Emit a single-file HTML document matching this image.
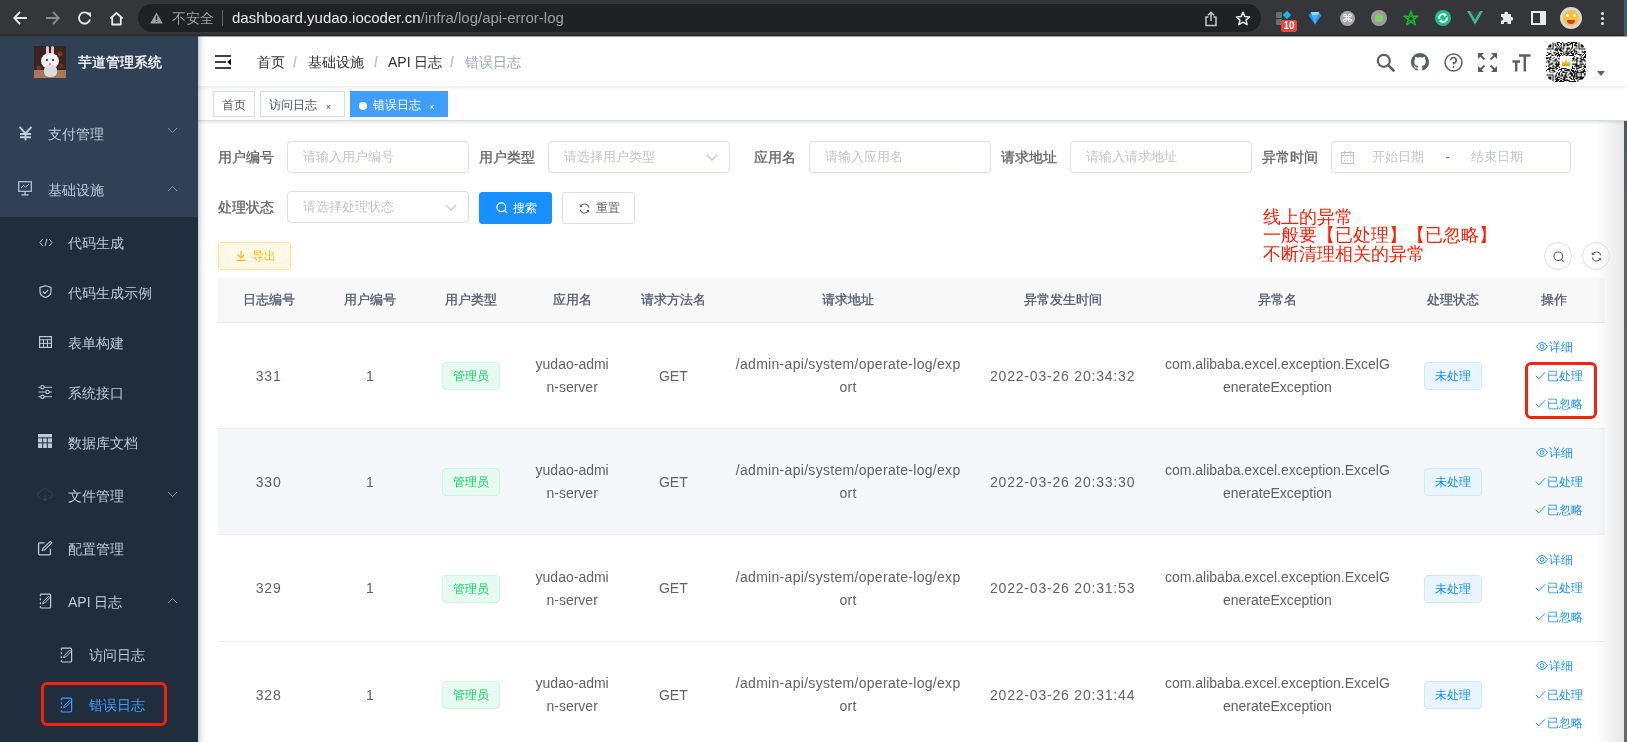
<!DOCTYPE html>
<html><head><meta charset="utf-8">
<style>
*{box-sizing:border-box;margin:0;padding:0}
html,body{width:1627px;height:742px;overflow:hidden;background:#fff}
body{position:relative;font-family:"Liberation Sans",sans-serif;color:#606266;will-change:transform}
.abs{position:absolute}
/* browser chrome */
#chrome{position:absolute;left:0;top:0;width:1627px;height:36px;background:#35363a}
#pill{position:absolute;left:138px;top:4px;width:1123px;height:28px;border-radius:14px;background:#202124}
.ct{position:absolute;white-space:nowrap}
/* sidebar */
#side{position:absolute;left:0;top:36px;width:198px;height:706px;background:#304156;overflow:hidden}
#sub{position:absolute;left:0;top:181px;width:198px;height:525px;background:#1f2d3d}
.mi{position:absolute;color:#bfcbd9;font-size:14px;white-space:nowrap;line-height:20px}
.ico{position:absolute}
/* header */
#nav{position:absolute;z-index:2;left:198px;top:36px;width:1429px;height:50px;background:#fff;box-shadow:0 2px 4px rgba(0,21,41,.08)}
#tags{position:absolute;z-index:1;left:198px;top:86px;width:1429px;height:35px;background:#fff;border-bottom:1px solid #d8dce5;box-shadow:0 1px 3px 0 rgba(0,0,0,.12),0 0 3px 0 rgba(0,0,0,.04)}
.tag{position:absolute;top:5px;height:26px;line-height:26px;border:1px solid #d8dce5;color:#495060;background:#fff;font-size:12px;padding:0 8px;white-space:nowrap}
.tag.act{background:#409eff;border-color:#409eff;color:#fff}
.bc{position:absolute;top:52px;font-size:14px;line-height:20px;white-space:nowrap}
.lbl{position:absolute;width:56px;text-align:right;font-size:14px;font-weight:normal;-webkit-text-stroke:0.3px #606266;color:#606266;line-height:32px;white-space:nowrap}
.inp{position:absolute;height:32px;border:1px solid #dcdfe6;border-radius:4px;background:#fff;font-size:13px;color:#c0c4cc;line-height:30px;padding-left:15px;white-space:nowrap}
.arr{position:absolute;right:11px;top:12px}
.btn{position:absolute;height:32px;border-radius:3px;font-size:12px;line-height:30px;white-space:nowrap;text-align:center}
.circ{position:absolute;width:28px;height:28px;border:1px solid #dcdfe6;border-radius:50%;background:#fff}
.note{position:absolute;color:#fa2008;font-size:18.4px;line-height:18.5px;white-space:nowrap}
#tbl{position:absolute;left:218px;top:278px;width:1387px;border-collapse:collapse;table-layout:fixed}
#tbl th{height:44px;background:#f8f8f9;color:#515a6e;font-size:13px;font-weight:normal;-webkit-text-stroke:0.3px #515a6e;border-bottom:1px solid #dfe6ec;text-align:center;vertical-align:middle;padding:0}
#tbl td{border-bottom:1px solid #ebeef5;text-align:center;vertical-align:middle;font-size:14px;color:#606266;line-height:23px;padding:2px 0 0 0;white-space:nowrap}
#tbl tr.hov td{background:#f5f7fa}
.etag{display:inline-block;height:28px;line-height:26px;padding:0 10px;font-size:12px;border-radius:4px;border:1px solid}
.etag.g{background:#e7faf0;border-color:#d0f5e0;color:#13ce66}
.etag.b{background:#e8f4ff;border-color:#d1e9ff;color:#1890ff}
#tbl td.ops{font-size:12px;color:#1890ff;line-height:28.5px}
.ops div{height:28.5px;white-space:nowrap}
.ops div+div{padding-left:10px}
</style></head><body>

<!-- ============ CHROME ============ -->
<div id="chrome">
  <div class="abs" style="left:0;top:34px;width:1627px;height:2px;background:#2c2d31"></div>
  <!-- back -->
  <svg class="abs" style="left:13px;top:11px" width="15" height="14" viewBox="0 0 15 14"><path d="M7 1L1.2 7L7 13M1.5 7H14" fill="none" stroke="#e8eaed" stroke-width="1.8"/></svg>
  <svg class="abs" style="left:45px;top:11px" width="15" height="14" viewBox="0 0 15 14"><path d="M8 1L13.8 7L8 13M13.5 7H1" fill="none" stroke="#8a8b8e" stroke-width="1.8"/></svg>
  <svg class="abs" style="left:77px;top:11px" width="16" height="15" viewBox="0 0 16 15"><path d="M13 8.5A5.6 5.6 0 1 1 11.5 3" fill="none" stroke="#e8eaed" stroke-width="1.8"/><path d="M9 1.5H14V6.5Z" fill="#e8eaed"/></svg>
  <svg class="abs" style="left:109px;top:11px" width="15" height="15" viewBox="0 0 15 15"><path d="M1.5 7.5L7.5 1.8L13.5 7.5M3.2 6V13.5H11.8V6" fill="none" stroke="#e8eaed" stroke-width="1.8" stroke-linejoin="round"/></svg>
  <div id="pill"></div>
  <svg class="abs" style="left:150px;top:12px" width="13" height="12" viewBox="0 0 13 12"><path d="M6.5 0.5L12.8 11.5H0.2Z" fill="#9aa0a6"/><rect x="5.9" y="3.8" width="1.3" height="4.2" fill="#202124"/><rect x="5.9" y="8.8" width="1.3" height="1.3" fill="#202124"/></svg>
  <div class="ct" style="left:172px;top:9px;font-size:14px;line-height:18px;color:#9aa0a6">不安全</div>
  <div class="abs" style="left:222px;top:10px;width:1px;height:16px;background:#5f6368"></div>
  <div class="ct" style="left:232px;top:9px;font-size:15px;line-height:18px;color:#e8eaed">dashboard.yudao.iocoder.cn<span style="color:#9aa0a6">/infra/log/api-error-log</span></div>
  <!-- share -->
  <svg class="abs" style="left:1204px;top:11px" width="14" height="16" viewBox="0 0 14 16"><path d="M4.5 6H2V14.5H12V6H9.5M7 10V1.5M4 4.3L7 1.3L10 4.3" fill="none" stroke="#c4c7c5" stroke-width="1.5"/></svg>
  <!-- star -->
  <svg class="abs" style="left:1235px;top:11px" width="16" height="15" viewBox="0 0 16 15"><path d="M8 1.2L9.9 5.6L14.6 6L11 9.1L12.1 13.7L8 11.2L3.9 13.7L5 9.1L1.4 6L6.1 5.6Z" fill="none" stroke="#e8eaed" stroke-width="1.5" stroke-linejoin="round"/></svg>
  <!-- ext 1 -->
  <div class="abs" style="left:1276px;top:12px;width:6px;height:6px;background:#6b6d70;border-radius:1px"></div>
  <div class="abs" style="left:1276px;top:19px;width:6px;height:6px;background:#6b6d70;border-radius:1px"></div>
  <div class="abs" style="left:1284px;top:12px;width:6px;height:6px;background:#1ab0f5;transform:rotate(45deg)"></div>
  <div class="abs" style="left:1281px;top:20px;width:16px;height:12px;background:#e8453c;border-radius:2px;color:#fff;font-size:10px;line-height:12px;text-align:center;font-weight:bold">10</div>
  <!-- diamond -->
  <svg class="abs" style="left:1308px;top:11px" width="14" height="14" viewBox="0 0 14 14"><path d="M3 1H11L13.5 4.5L7 13.5L0.5 4.5Z" fill="#2a8de0"/><path d="M3 1H11L10 4.5H4Z" fill="#8fd3ff"/><path d="M4 4.5H10L7 13.5Z" fill="#45b0ff"/></svg>
  <!-- cmd -->
  <div class="abs" style="left:1340px;top:11px;width:15px;height:15px;border-radius:50%;background:#a8a8a8"></div>
  <div class="ct" style="left:1340px;top:11px;width:15px;text-align:center;font-size:11px;line-height:15px;color:#fff">⌘</div>
  <!-- gray circle w green -->
  <div class="abs" style="left:1371px;top:10px;width:16px;height:16px;border-radius:50%;background:#9c9c9c"></div>
  <div class="abs" style="left:1375px;top:14px;width:8px;height:8px;border-radius:50%;background:#7fd26c"></div>
  <!-- green star -->
  <svg class="abs" style="left:1403px;top:10px" width="16" height="17" viewBox="0 0 16 17"><path d="M8 1L12.3 14.8L1 6.2H15L3.7 14.8Z" fill="none" stroke="#19b02c" stroke-width="1.5" stroke-linejoin="round"/></svg>
  <!-- teal -->
  <div class="abs" style="left:1435px;top:10px;width:16px;height:16px;border-radius:50%;background:#1bbf8f"></div>
  <svg class="abs" style="left:1435px;top:10px" width="16" height="16" viewBox="0 0 16 16"><path d="M4.5 9A3.5 3.5 0 0 1 10 5M11.5 7A3.5 3.5 0 0 1 6 11" fill="none" stroke="#fff" stroke-width="1.8"/><path d="M9 3L12 5L9 7Z M7 9L4 11L7 13Z" fill="#fff"/></svg>
  <!-- vue -->
  <svg class="abs" style="left:1467px;top:11px" width="16" height="14" viewBox="0 0 16 14"><path d="M0 0H3.2L8 8.3L12.8 0H16L8 13.8Z" fill="#41b883"/><path d="M3.2 0H5.8L8 3.8L10.2 0H12.8L8 8.3Z" fill="#34495e"/></svg>
  <!-- puzzle -->
  <svg class="abs" style="left:1500px;top:11px" width="15" height="14" viewBox="0 0 15 14"><path d="M1 3H4.5A1.8 1.8 0 1 1 8 3H11V6A1.8 1.8 0 1 1 11 9.5V13H7.5A1.8 1.8 0 1 0 4 13H1V9.5A1.8 1.8 0 1 0 1 6Z" fill="#e8eaed"/></svg>
  <!-- side panel -->
  <svg class="abs" style="left:1531px;top:11px" width="15" height="14" viewBox="0 0 15 14"><rect x="1" y="1" width="13" height="12" fill="none" stroke="#e8eaed" stroke-width="2"/><rect x="9" y="1" width="5" height="12" fill="#e8eaed"/></svg>
  <!-- avatar -->
  <div class="abs" style="left:1560px;top:7px;width:22px;height:22px;border-radius:50%;background:#d7d7d7"></div>
  <div class="abs" style="left:1563px;top:10px;width:16px;height:16px;border-radius:50%;background:#f6c33b"></div>
  <div class="abs" style="left:1567px;top:20px;width:8px;height:4px;border-radius:0 0 4px 4px;background:#d8334a"></div>
  <div class="abs" style="left:1566px;top:14px;width:3px;height:3px;border-radius:50%;background:#fff"></div>
  <div class="abs" style="left:1573px;top:14px;width:3px;height:3px;border-radius:50%;background:#fff"></div>
  <!-- kebab -->
  <div class="abs" style="left:1601px;top:12px;width:3px;height:3px;border-radius:50%;background:#e8eaed"></div>
  <div class="abs" style="left:1601px;top:17px;width:3px;height:3px;border-radius:50%;background:#e8eaed"></div>
  <div class="abs" style="left:1601px;top:22px;width:3px;height:3px;border-radius:50%;background:#e8eaed"></div>
</div>

<!-- ============ SIDEBAR ============ -->
<div class="abs" style="left:0;top:36px;width:1627px;height:1px;background:rgba(44,45,49,.45);z-index:5"></div>
<div id="side">
  <div id="sub"></div>
  <!-- logo -->
  <div class="abs" style="left:34px;top:10px;width:32px;height:32px;background:#3a2420;overflow:hidden">
    <div class="abs" style="left:0;top:0;width:32px;height:32px;background:radial-gradient(circle at 26px 8px,#7a3a2a 0,#7a3a2a 2px,transparent 3px),radial-gradient(circle at 5px 22px,#6e3a2c 0,#6e3a2c 2px,transparent 3px),radial-gradient(circle at 27px 20px,#5e3028 0,#5e3028 2px,transparent 3px)"></div>
    <div class="abs" style="left:0;top:24px;width:32px;height:8px;background:#a9765a"></div>
    <div class="abs" style="left:12px;top:0px;width:3px;height:9px;border-radius:2px;background:#eec4cc"></div>
    <div class="abs" style="left:17px;top:0px;width:3px;height:9px;border-radius:2px;background:#eec4cc"></div>
    <div class="abs" style="left:7px;top:7px;width:18px;height:16px;border-radius:50%;background:#f2f2f2"></div>
    <div class="abs" style="left:10px;top:19px;width:13px;height:12px;border-radius:40%;background:#dcdcdc"></div>
    <div class="abs" style="left:12px;top:13px;width:2px;height:2px;background:#2c5aa0"></div>
    <div class="abs" style="left:18px;top:13px;width:2px;height:2px;background:#2c5aa0"></div>
    <div class="abs" style="left:15px;top:17px;width:2px;height:2px;background:#e29a8a"></div>
  </div>
  <div class="mi" style="left:78px;top:16px;color:#fff;font-weight:normal;-webkit-text-stroke:0.3px #fff;font-size:14px">芋道管理系统</div>

  <!-- 支付管理 -->
  <svg class="ico" style="left:18px;top:90px" width="15" height="15" viewBox="0 0 15 15"><path d="M1.5 0.8L7.5 7.5L13.5 0.8M7.5 7.5V14.5M2 8H13M2 11.3H13" fill="none" stroke="#bfcbd9" stroke-width="1.9"/></svg>
  <div class="mi" style="left:48px;top:88px">支付管理</div>
  <svg class="ico" style="left:167px;top:91px" width="11" height="7" viewBox="0 0 11 7"><path d="M1 1L5.5 5.5L10 1" fill="none" stroke="#909399" stroke-width="1"/></svg>
  <!-- 基础设施 -->
  <svg class="ico" style="left:18px;top:145px" width="14" height="15" viewBox="0 0 14 15"><rect x="0.7" y="0.7" width="12.6" height="9.6" fill="none" stroke="#bfcbd9" stroke-width="1.2"/><path d="M3 7L5.5 4.2L7.5 6.2L11 3" fill="none" stroke="#bfcbd9" stroke-width="1"/><path d="M7 10.5V13.3M3.5 13.8H10.5" fill="none" stroke="#bfcbd9" stroke-width="1.2"/></svg>
  <div class="mi" style="left:48px;top:144px">基础设施</div>
  <svg class="ico" style="left:167px;top:149px" width="11" height="7" viewBox="0 0 11 7"><path d="M1 6L5.5 1.5L10 6" fill="none" stroke="#909399" stroke-width="1"/></svg>

  <!-- sub items -->
  <svg class="ico" style="left:38.5px;top:202px" width="14" height="9" viewBox="0 0 14 9"><path d="M3.8 1L0.9 4.5L3.8 8M10.2 1L13.1 4.5L10.2 8M8 0.8L6 8.2" fill="none" stroke="#bfcbd9" stroke-width="1"/></svg>
  <div class="mi" style="left:68px;top:197px">代码生成</div>

  <svg class="ico" style="left:39px;top:249px" width="13" height="13" viewBox="0 0 13 13"><path d="M6.5 0.7L12 2.5V6.5C12 9.5 9.5 11.5 6.5 12.4C3.5 11.5 1 9.5 1 6.5V2.5Z" fill="none" stroke="#bfcbd9" stroke-width="1.2"/><path d="M3.8 6.5L5.8 8.3L9.2 4.8" fill="none" stroke="#bfcbd9" stroke-width="1.2"/></svg>
  <div class="mi" style="left:68px;top:247px">代码生成示例</div>

  <svg class="ico" style="left:39px;top:300px" width="13" height="12" viewBox="0 0 13 12"><rect x="0.6" y="0.6" width="11.8" height="10.8" fill="none" stroke="#bfcbd9" stroke-width="1.2"/><path d="M0.6 3.8H12.4M0.6 7.4H12.4M4.5 3.8V11.4M8.5 3.8V11.4" fill="none" stroke="#bfcbd9" stroke-width="1"/></svg>
  <div class="mi" style="left:68px;top:297px">表单构建</div>

  <svg class="ico" style="left:38px;top:349px" width="14" height="14" viewBox="0 0 14 14"><path d="M0.5 2.2H14M0.5 7H14M0.5 11.8H14" stroke="#bfcbd9" stroke-width="1.1"/><circle cx="4.5" cy="2.2" r="1.7" fill="#1f2d3d" stroke="#bfcbd9" stroke-width="1.1"/><circle cx="9.5" cy="7" r="1.7" fill="#1f2d3d" stroke="#bfcbd9" stroke-width="1.1"/><circle cx="4.5" cy="11.8" r="1.7" fill="#1f2d3d" stroke="#bfcbd9" stroke-width="1.1"/></svg>
  <div class="mi" style="left:68px;top:347px">系统接口</div>

  <svg class="ico" style="left:38px;top:398px" width="14" height="14" viewBox="0 0 14 14"><rect x="0" y="0" width="14" height="14" fill="#bfcbd9"/><path d="M0 3.8H14M0 8.9H14M4.7 3.8V14M9.3 3.8V14" stroke="#1f2d3d" stroke-width="1"/></svg>
  <div class="mi" style="left:68px;top:397px">数据库文档</div>

  <svg class="ico" style="left:37px;top:452px" width="16" height="13" viewBox="0 0 16 13"><path d="M4 10H3.5A3 3 0 0 1 3.5 4A4.5 4.5 0 0 1 12 3.5A3 3 0 0 1 12.5 10H12M8 6V12.5M6 10.5L8 12.5L10 10.5" fill="none" stroke="#3a3f44" stroke-width="1.1"/></svg>
  <div class="mi" style="left:68px;top:450px">文件管理</div>
  <svg class="ico" style="left:167px;top:455px" width="11" height="7" viewBox="0 0 11 7"><path d="M1 1L5.5 5.5L10 1" fill="none" stroke="#909399" stroke-width="1"/></svg>

  <svg class="ico" style="left:37px;top:504px" width="16" height="16" viewBox="0 0 16 16"><path d="M7.5 2.8H2.6Q1.6 2.8 1.6 3.8V13.8Q1.6 14.8 2.6 14.8H12.4Q13.4 14.8 13.4 13.8V8.8" fill="none" stroke="#bfcbd9" stroke-width="1.3"/><path d="M13.3 1.3L14.8 2.8L7.8 9.8L5.3 10.6L6.1 8.2Z" fill="none" stroke="#bfcbd9" stroke-width="1.1" stroke-linejoin="round"/></svg>
  <div class="mi" style="left:68px;top:503px">配置管理</div>

  <svg class="ico" style="left:38px;top:557px" width="14" height="16" viewBox="0 0 14 16"><path d="M2.5 1.2H11.6Q12.6 1.2 12.6 2.2V14Q12.6 15 11.6 15H2.5" fill="none" stroke="#bfcbd9" stroke-width="1.2"/><path d="M2.4 1.2V3.2M2.4 5.2V7.2M2.4 9.2V11.2M2.4 13.2V15" stroke="#bfcbd9" stroke-width="1.2"/><path d="M10.6 3.2L12 4.6L6.6 10L4.6 10.7L5.3 8.6Z" fill="none" stroke="#bfcbd9" stroke-width="1" stroke-linejoin="round"/></svg>
  <div class="mi" style="left:68px;top:556px">API 日志</div>
  <svg class="ico" style="left:167px;top:561px" width="11" height="7" viewBox="0 0 11 7"><path d="M1 6L5.5 1.5L10 6" fill="none" stroke="#909399" stroke-width="1"/></svg>

  <svg class="ico" style="left:59px;top:611px" width="14" height="16" viewBox="0 0 14 16"><path d="M2.5 1.2H11.6Q12.6 1.2 12.6 2.2V14Q12.6 15 11.6 15H2.5" fill="none" stroke="#bfcbd9" stroke-width="1.2"/><path d="M2.4 1.2V3.2M2.4 5.2V7.2M2.4 9.2V11.2M2.4 13.2V15" stroke="#bfcbd9" stroke-width="1.2"/><path d="M10.6 3.2L12 4.6L6.6 10L4.6 10.7L5.3 8.6Z" fill="none" stroke="#bfcbd9" stroke-width="1" stroke-linejoin="round"/></svg>
  <div class="mi" style="left:89px;top:609px">访问日志</div>

  <svg class="ico" style="left:59px;top:661px" width="14" height="16" viewBox="0 0 14 16"><path d="M2.5 1.2H11.6Q12.6 1.2 12.6 2.2V14Q12.6 15 11.6 15H2.5" fill="none" stroke="#409eff" stroke-width="1.2"/><path d="M2.4 1.2V3.2M2.4 5.2V7.2M2.4 9.2V11.2M2.4 13.2V15" stroke="#409eff" stroke-width="1.2"/><path d="M10.6 3.2L12 4.6L6.6 10L4.6 10.7L5.3 8.6Z" fill="none" stroke="#409eff" stroke-width="1" stroke-linejoin="round"/></svg>
  <div class="mi" style="left:89px;top:659px;color:#409eff">错误日志</div>
  <div class="abs" style="left:41px;top:646px;width:126px;height:44px;border:3px solid #f5230c;border-radius:6px"></div>
</div>

<!-- ============ NAVBAR ============ -->
<div id="nav">
  <svg class="abs" style="left:17px;top:19px" width="16" height="14" viewBox="0 0 16 14"><path d="M0 1H16M0 7H11M0 13H16" stroke="#000" stroke-width="1.7"/><path d="M16 3.8V10.2L12.2 7Z" fill="#000"/></svg>
  <div class="bc" style="left:59px;top:16px;color:#303133">首页</div>
  <div class="bc" style="left:95px;top:16px;color:#c0c4cc;font-weight:bold">/</div>
  <div class="bc" style="left:110px;top:16px;color:#303133">基础设施</div>
  <div class="bc" style="left:176px;top:16px;color:#c0c4cc;font-weight:bold">/</div>
  <div class="bc" style="left:190px;top:16px;color:#303133">API 日志</div>
  <div class="bc" style="left:252px;top:16px;color:#c0c4cc;font-weight:bold">/</div>
  <div class="bc" style="left:267px;top:16px;color:#97a8be">错误日志</div>
  <!-- right icons -->
  <svg class="abs" style="left:1178px;top:17px" width="19" height="19" viewBox="0 0 19 19"><circle cx="7.8" cy="7.8" r="6" fill="none" stroke="#5a5e66" stroke-width="2.2"/><path d="M12.2 12.2L17.5 17.5" stroke="#5a5e66" stroke-width="2.6" stroke-linecap="round"/></svg>
  <svg class="abs" style="left:1213px;top:17px" width="18" height="18" viewBox="0 0 16 16"><path fill="#5a5e66" d="M8 0C3.58 0 0 3.58 0 8c0 3.54 2.29 6.53 5.47 7.59.4.07.55-.17.55-.38 0-.19-.01-.82-.01-1.49-2.01.37-2.53-.49-2.69-.94-.09-.23-.48-.94-.82-1.13-.28-.15-.68-.52-.01-.53.63-.01 1.08.58 1.23.82.72 1.21 1.87.87 2.33.66.07-.52.28-.87.51-1.07-1.78-.2-3.64-.89-3.64-3.95 0-.87.31-1.59.82-2.15-.08-.2-.36-1.02.08-2.12 0 0 .67-.21 2.2.82.64-.18 1.32-.27 2-.27.68 0 1.36.09 2 .27 1.53-1.04 2.2-.82 2.2-.82.44 1.1.16 1.92.08 2.12.51.56.82 1.27.82 2.15 0 3.07-1.87 3.75-3.65 3.95.29.25.54.73.54 1.48 0 1.07-.01 1.93-.01 2.2 0 .21.15.46.55.38A8.013 8.013 0 0016 8c0-4.42-3.58-8-8-8z"/></svg>
  <svg class="abs" style="left:1246px;top:17px" width="19" height="19" viewBox="0 0 19 19"><circle cx="9.5" cy="9.5" r="8.5" fill="none" stroke="#5a5e66" stroke-width="1.5"/><path d="M6.8 7.2A2.7 2.7 0 1 1 9.5 9.9V11.5" fill="none" stroke="#5a5e66" stroke-width="1.6"/><circle cx="9.5" cy="14" r="1" fill="#5a5e66"/></svg>
  <svg class="abs" style="left:1280px;top:17px" width="19" height="19" viewBox="0 0 19 19"><g fill="#5a5e66"><path d="M0 0H6L0 6Z"/><path d="M19 0H13L19 6Z"/><path d="M0 19H6L0 13Z"/><path d="M19 19H13L19 13Z"/></g><g stroke="#5a5e66" stroke-width="2"><path d="M2 2L6.5 6.5M17 2L12.5 6.5M2 17L6.5 12.5M17 17L12.5 12.5"/></g></svg>
  <svg class="abs" style="left:1314px;top:18px" width="19" height="18" viewBox="0 0 19 18"><path d="M7 1.5H18.5M12.8 1.5V17.5M0.5 7.5H8M4.2 7.5V17.5" stroke="#5a5e66" stroke-width="2.4"/></svg>
  <!-- avatar -->
  <div class="abs" style="left:1348px;top:6px;width:40px;height:40px;border-radius:10px;overflow:hidden;background:#fff">
    <svg width="40" height="40" viewBox="0 0 40 40"><path fill="#151515" d="M0.00 0.00h7.57v1.08h-7.57zM10.81 0.00h3.24v1.08h-3.24zM16.22 0.00h1.08v1.08h-1.08zM21.62 0.00h2.16v1.08h-2.16zM24.86 0.00h6.49v1.08h-6.49zM32.43 0.00h7.57v1.08h-7.57zM0.00 1.08h1.08v1.08h-1.08zM6.49 1.08h1.08v1.08h-1.08zM8.65 1.08h1.08v1.08h-1.08zM10.81 1.08h1.08v1.08h-1.08zM14.05 1.08h2.16v1.08h-2.16zM17.30 1.08h1.08v1.08h-1.08zM19.46 1.08h2.16v1.08h-2.16zM23.78 1.08h3.24v1.08h-3.24zM29.19 1.08h2.16v1.08h-2.16zM32.43 1.08h1.08v1.08h-1.08zM38.92 1.08h1.08v1.08h-1.08zM0.00 2.16h1.08v1.08h-1.08zM2.16 2.16h3.24v1.08h-3.24zM6.49 2.16h1.08v1.08h-1.08zM8.65 2.16h1.08v1.08h-1.08zM10.81 2.16h2.16v1.08h-2.16zM15.14 2.16h1.08v1.08h-1.08zM17.30 2.16h2.16v1.08h-2.16zM20.54 2.16h4.32v1.08h-4.32zM25.95 2.16h1.08v1.08h-1.08zM28.11 2.16h2.16v1.08h-2.16zM32.43 2.16h1.08v1.08h-1.08zM34.59 2.16h3.24v1.08h-3.24zM38.92 2.16h1.08v1.08h-1.08zM0.00 3.24h1.08v1.08h-1.08zM2.16 3.24h3.24v1.08h-3.24zM6.49 3.24h1.08v1.08h-1.08zM8.65 3.24h2.16v1.08h-2.16zM11.89 3.24h1.08v1.08h-1.08zM14.05 3.24h1.08v1.08h-1.08zM17.30 3.24h2.16v1.08h-2.16zM20.54 3.24h2.16v1.08h-2.16zM25.95 3.24h1.08v1.08h-1.08zM28.11 3.24h3.24v1.08h-3.24zM32.43 3.24h1.08v1.08h-1.08zM34.59 3.24h3.24v1.08h-3.24zM38.92 3.24h1.08v1.08h-1.08zM0.00 4.32h1.08v1.08h-1.08zM2.16 4.32h3.24v1.08h-3.24zM6.49 4.32h1.08v1.08h-1.08zM10.81 4.32h1.08v1.08h-1.08zM12.97 4.32h1.08v1.08h-1.08zM15.14 4.32h1.08v1.08h-1.08zM17.30 4.32h1.08v1.08h-1.08zM25.95 4.32h1.08v1.08h-1.08zM30.27 4.32h1.08v1.08h-1.08zM32.43 4.32h1.08v1.08h-1.08zM34.59 4.32h3.24v1.08h-3.24zM38.92 4.32h1.08v1.08h-1.08zM0.00 5.41h1.08v1.08h-1.08zM6.49 5.41h1.08v1.08h-1.08zM9.73 5.41h1.08v1.08h-1.08zM11.89 5.41h1.08v1.08h-1.08zM14.05 5.41h2.16v1.08h-2.16zM17.30 5.41h1.08v1.08h-1.08zM20.54 5.41h3.24v1.08h-3.24zM24.86 5.41h2.16v1.08h-2.16zM29.19 5.41h1.08v1.08h-1.08zM32.43 5.41h1.08v1.08h-1.08zM38.92 5.41h1.08v1.08h-1.08zM0.00 6.49h7.57v1.08h-7.57zM8.65 6.49h6.49v1.08h-6.49zM16.22 6.49h2.16v1.08h-2.16zM20.54 6.49h3.24v1.08h-3.24zM24.86 6.49h1.08v1.08h-1.08zM28.11 6.49h1.08v1.08h-1.08zM30.27 6.49h1.08v1.08h-1.08zM32.43 6.49h7.57v1.08h-7.57zM8.65 7.57h3.24v1.08h-3.24zM12.97 7.57h3.24v1.08h-3.24zM20.54 7.57h1.08v1.08h-1.08zM23.78 7.57h1.08v1.08h-1.08zM27.03 7.57h2.16v1.08h-2.16zM4.32 8.65h1.08v1.08h-1.08zM10.81 8.65h1.08v1.08h-1.08zM14.05 8.65h3.24v1.08h-3.24zM19.46 8.65h2.16v1.08h-2.16zM22.70 8.65h1.08v1.08h-1.08zM24.86 8.65h2.16v1.08h-2.16zM28.11 8.65h3.24v1.08h-3.24zM35.68 8.65h1.08v1.08h-1.08zM37.84 8.65h2.16v1.08h-2.16zM1.08 9.73h1.08v1.08h-1.08zM7.57 9.73h2.16v1.08h-2.16zM11.89 9.73h1.08v1.08h-1.08zM17.30 9.73h1.08v1.08h-1.08zM19.46 9.73h1.08v1.08h-1.08zM21.62 9.73h1.08v1.08h-1.08zM23.78 9.73h2.16v1.08h-2.16zM28.11 9.73h1.08v1.08h-1.08zM30.27 9.73h1.08v1.08h-1.08zM32.43 9.73h1.08v1.08h-1.08zM35.68 9.73h4.32v1.08h-4.32zM2.16 10.81h3.24v1.08h-3.24zM7.57 10.81h1.08v1.08h-1.08zM9.73 10.81h3.24v1.08h-3.24zM14.05 10.81h2.16v1.08h-2.16zM17.30 10.81h1.08v1.08h-1.08zM19.46 10.81h4.32v1.08h-4.32zM24.86 10.81h3.24v1.08h-3.24zM29.19 10.81h2.16v1.08h-2.16zM37.84 10.81h1.08v1.08h-1.08zM2.16 11.89h2.16v1.08h-2.16zM5.41 11.89h1.08v1.08h-1.08zM8.65 11.89h2.16v1.08h-2.16zM11.89 11.89h2.16v1.08h-2.16zM15.14 11.89h1.08v1.08h-1.08zM17.30 11.89h2.16v1.08h-2.16zM20.54 11.89h2.16v1.08h-2.16zM25.95 11.89h2.16v1.08h-2.16zM29.19 11.89h1.08v1.08h-1.08zM31.35 11.89h4.32v1.08h-4.32zM36.76 11.89h1.08v1.08h-1.08zM38.92 11.89h1.08v1.08h-1.08zM0.00 12.97h2.16v1.08h-2.16zM5.41 12.97h2.16v1.08h-2.16zM8.65 12.97h1.08v1.08h-1.08zM10.81 12.97h4.32v1.08h-4.32zM16.22 12.97h1.08v1.08h-1.08zM19.46 12.97h2.16v1.08h-2.16zM22.70 12.97h5.41v1.08h-5.41zM33.51 12.97h1.08v1.08h-1.08zM35.68 12.97h1.08v1.08h-1.08zM38.92 12.97h1.08v1.08h-1.08zM4.32 14.05h1.08v1.08h-1.08zM10.81 14.05h1.08v1.08h-1.08zM12.97 14.05h1.08v1.08h-1.08zM28.11 14.05h1.08v1.08h-1.08zM34.59 14.05h1.08v1.08h-1.08zM37.84 14.05h2.16v1.08h-2.16zM0.00 15.14h5.41v1.08h-5.41zM7.57 15.14h1.08v1.08h-1.08zM27.03 15.14h1.08v1.08h-1.08zM30.27 15.14h2.16v1.08h-2.16zM34.59 15.14h1.08v1.08h-1.08zM36.76 15.14h3.24v1.08h-3.24zM0.00 16.22h2.16v1.08h-2.16zM3.24 16.22h1.08v1.08h-1.08zM6.49 16.22h1.08v1.08h-1.08zM9.73 16.22h1.08v1.08h-1.08zM11.89 16.22h2.16v1.08h-2.16zM25.95 16.22h3.24v1.08h-3.24zM30.27 16.22h2.16v1.08h-2.16zM33.51 16.22h2.16v1.08h-2.16zM36.76 16.22h1.08v1.08h-1.08zM3.24 17.30h2.16v1.08h-2.16zM8.65 17.30h2.16v1.08h-2.16zM27.03 17.30h1.08v1.08h-1.08zM29.19 17.30h2.16v1.08h-2.16zM34.59 17.30h4.32v1.08h-4.32zM1.08 18.38h2.16v1.08h-2.16zM6.49 18.38h3.24v1.08h-3.24zM10.81 18.38h1.08v1.08h-1.08zM25.95 18.38h1.08v1.08h-1.08zM28.11 18.38h1.08v1.08h-1.08zM30.27 18.38h2.16v1.08h-2.16zM33.51 18.38h2.16v1.08h-2.16zM37.84 18.38h2.16v1.08h-2.16zM0.00 19.46h1.08v1.08h-1.08zM2.16 19.46h2.16v1.08h-2.16zM9.73 19.46h1.08v1.08h-1.08zM11.89 19.46h2.16v1.08h-2.16zM30.27 19.46h1.08v1.08h-1.08zM33.51 19.46h3.24v1.08h-3.24zM2.16 20.54h1.08v1.08h-1.08zM5.41 20.54h2.16v1.08h-2.16zM9.73 20.54h1.08v1.08h-1.08zM11.89 20.54h1.08v1.08h-1.08zM30.27 20.54h1.08v1.08h-1.08zM3.24 21.62h3.24v1.08h-3.24zM8.65 21.62h5.41v1.08h-5.41zM25.95 21.62h5.41v1.08h-5.41zM33.51 21.62h4.32v1.08h-4.32zM38.92 21.62h1.08v1.08h-1.08zM2.16 22.70h2.16v1.08h-2.16zM6.49 22.70h1.08v1.08h-1.08zM9.73 22.70h3.24v1.08h-3.24zM29.19 22.70h4.32v1.08h-4.32zM34.59 22.70h1.08v1.08h-1.08zM37.84 22.70h1.08v1.08h-1.08zM0.00 23.78h1.08v1.08h-1.08zM2.16 23.78h1.08v1.08h-1.08zM6.49 23.78h2.16v1.08h-2.16zM9.73 23.78h3.24v1.08h-3.24zM25.95 23.78h1.08v1.08h-1.08zM28.11 23.78h5.41v1.08h-5.41zM34.59 23.78h1.08v1.08h-1.08zM36.76 23.78h3.24v1.08h-3.24zM3.24 24.86h2.16v1.08h-2.16zM6.49 24.86h1.08v1.08h-1.08zM8.65 24.86h2.16v1.08h-2.16zM12.97 24.86h1.08v1.08h-1.08zM25.95 24.86h1.08v1.08h-1.08zM30.27 24.86h1.08v1.08h-1.08zM32.43 24.86h3.24v1.08h-3.24zM37.84 24.86h2.16v1.08h-2.16zM2.16 25.95h6.49v1.08h-6.49zM9.73 25.95h2.16v1.08h-2.16zM15.14 25.95h5.41v1.08h-5.41zM25.95 25.95h3.24v1.08h-3.24zM30.27 25.95h3.24v1.08h-3.24zM36.76 25.95h1.08v1.08h-1.08zM1.08 27.03h3.24v1.08h-3.24zM6.49 27.03h1.08v1.08h-1.08zM9.73 27.03h1.08v1.08h-1.08zM12.97 27.03h3.24v1.08h-3.24zM18.38 27.03h1.08v1.08h-1.08zM20.54 27.03h3.24v1.08h-3.24zM24.86 27.03h1.08v1.08h-1.08zM30.27 27.03h1.08v1.08h-1.08zM35.68 27.03h1.08v1.08h-1.08zM37.84 27.03h1.08v1.08h-1.08zM0.00 28.11h1.08v1.08h-1.08zM3.24 28.11h1.08v1.08h-1.08zM5.41 28.11h3.24v1.08h-3.24zM11.89 28.11h1.08v1.08h-1.08zM15.14 28.11h1.08v1.08h-1.08zM18.38 28.11h5.41v1.08h-5.41zM24.86 28.11h3.24v1.08h-3.24zM29.19 28.11h1.08v1.08h-1.08zM31.35 28.11h1.08v1.08h-1.08zM33.51 28.11h1.08v1.08h-1.08zM36.76 28.11h2.16v1.08h-2.16zM3.24 29.19h1.08v1.08h-1.08zM7.57 29.19h2.16v1.08h-2.16zM14.05 29.19h1.08v1.08h-1.08zM16.22 29.19h2.16v1.08h-2.16zM23.78 29.19h1.08v1.08h-1.08zM25.95 29.19h6.49v1.08h-6.49zM34.59 29.19h5.41v1.08h-5.41zM4.32 30.27h1.08v1.08h-1.08zM6.49 30.27h1.08v1.08h-1.08zM10.81 30.27h1.08v1.08h-1.08zM12.97 30.27h1.08v1.08h-1.08zM16.22 30.27h5.41v1.08h-5.41zM23.78 30.27h2.16v1.08h-2.16zM27.03 30.27h2.16v1.08h-2.16zM30.27 30.27h7.57v1.08h-7.57zM9.73 31.35h1.08v1.08h-1.08zM11.89 31.35h2.16v1.08h-2.16zM15.14 31.35h1.08v1.08h-1.08zM19.46 31.35h1.08v1.08h-1.08zM22.70 31.35h4.32v1.08h-4.32zM28.11 31.35h3.24v1.08h-3.24zM34.59 31.35h1.08v1.08h-1.08zM37.84 31.35h2.16v1.08h-2.16zM0.00 32.43h7.57v1.08h-7.57zM9.73 32.43h1.08v1.08h-1.08zM11.89 32.43h2.16v1.08h-2.16zM15.14 32.43h2.16v1.08h-2.16zM18.38 32.43h2.16v1.08h-2.16zM21.62 32.43h1.08v1.08h-1.08zM24.86 32.43h2.16v1.08h-2.16zM28.11 32.43h1.08v1.08h-1.08zM30.27 32.43h1.08v1.08h-1.08zM32.43 32.43h1.08v1.08h-1.08zM34.59 32.43h1.08v1.08h-1.08zM37.84 32.43h2.16v1.08h-2.16zM0.00 33.51h1.08v1.08h-1.08zM6.49 33.51h1.08v1.08h-1.08zM8.65 33.51h2.16v1.08h-2.16zM14.05 33.51h3.24v1.08h-3.24zM18.38 33.51h2.16v1.08h-2.16zM24.86 33.51h6.49v1.08h-6.49zM34.59 33.51h1.08v1.08h-1.08zM38.92 33.51h1.08v1.08h-1.08zM0.00 34.59h1.08v1.08h-1.08zM2.16 34.59h3.24v1.08h-3.24zM6.49 34.59h1.08v1.08h-1.08zM8.65 34.59h1.08v1.08h-1.08zM10.81 34.59h3.24v1.08h-3.24zM17.30 34.59h4.32v1.08h-4.32zM22.70 34.59h2.16v1.08h-2.16zM27.03 34.59h2.16v1.08h-2.16zM30.27 34.59h9.73v1.08h-9.73zM0.00 35.68h1.08v1.08h-1.08zM2.16 35.68h3.24v1.08h-3.24zM6.49 35.68h1.08v1.08h-1.08zM9.73 35.68h2.16v1.08h-2.16zM14.05 35.68h2.16v1.08h-2.16zM17.30 35.68h2.16v1.08h-2.16zM23.78 35.68h2.16v1.08h-2.16zM27.03 35.68h1.08v1.08h-1.08zM29.19 35.68h3.24v1.08h-3.24zM33.51 35.68h6.49v1.08h-6.49zM0.00 36.76h1.08v1.08h-1.08zM2.16 36.76h3.24v1.08h-3.24zM6.49 36.76h1.08v1.08h-1.08zM8.65 36.76h5.41v1.08h-5.41zM16.22 36.76h3.24v1.08h-3.24zM20.54 36.76h1.08v1.08h-1.08zM24.86 36.76h4.32v1.08h-4.32zM30.27 36.76h1.08v1.08h-1.08zM32.43 36.76h6.49v1.08h-6.49zM0.00 37.84h1.08v1.08h-1.08zM6.49 37.84h1.08v1.08h-1.08zM9.73 37.84h3.24v1.08h-3.24zM14.05 37.84h2.16v1.08h-2.16zM17.30 37.84h6.49v1.08h-6.49zM28.11 37.84h1.08v1.08h-1.08zM31.35 37.84h1.08v1.08h-1.08zM36.76 37.84h1.08v1.08h-1.08zM38.92 37.84h1.08v1.08h-1.08zM0.00 38.92h7.57v1.08h-7.57zM8.65 38.92h3.24v1.08h-3.24zM12.97 38.92h5.41v1.08h-5.41zM22.70 38.92h7.57v1.08h-7.57zM31.35 38.92h5.41v1.08h-5.41zM38.92 38.92h1.08v1.08h-1.08z"/><rect x="14.5" y="14.5" width="11" height="11" fill="#fff"/><path d="M15.5 24L16.5 18.5L18.5 21L20 16.5L21.5 21L23.5 18.5L24.5 24Z" fill="#f4b731"/><path d="M16 24H24V22.5H16Z" fill="#e89a1c"/></svg>
  </div>
  <svg class="abs" style="left:1399px;top:35px" width="8" height="5" viewBox="0 0 8 5"><path d="M0 0H8L4 5Z" fill="#5a5e66"/></svg>
</div>
<div id="tags">
  <div class="tag" style="left:15px">首页</div>
  <div class="tag" style="left:62px;width:85px">访问日志 <span style="display:inline-block;width:16px;text-align:center;font-size:9px;color:#495060;position:relative;top:1px">×</span></div>
  <div class="tag act" style="left:152px;width:98px"><span style="display:inline-block;width:8px;height:8px;border-radius:50%;background:#fff;margin-right:5.5px;vertical-align:-1px"></span>错误日志 <span style="display:inline-block;width:16px;text-align:center;font-size:9px;position:relative;top:1px">×</span></div>
</div>

<!-- ============ CONTENT ============ -->
<div class="lbl" style="left:218px;top:141px">用户编号</div>
<div class="inp" style="left:286.5px;top:141px;width:182px">请输入用户编号</div>
<div class="lbl" style="left:479px;top:141px">用户类型</div>
<div class="inp" style="left:547.5px;top:141px;width:182px">请选择用户类型<svg class="arr" width="12" height="7" viewBox="0 0 12 7"><path d="M0.8 0.8L6 6L11.2 0.8" fill="none" stroke="#c0c4cc" stroke-width="1.2"/></svg></div>
<div class="lbl" style="left:740px;top:141px">应用名</div>
<div class="inp" style="left:808.5px;top:141px;width:182px">请输入应用名</div>
<div class="lbl" style="left:1001px;top:141px">请求地址</div>
<div class="inp" style="left:1069.5px;top:141px;width:182px">请输入请求地址</div>
<div class="lbl" style="left:1262px;top:141px">异常时间</div>
<div class="inp" style="left:1330.5px;top:141px;width:240px;padding-left:0">
  <svg class="abs" style="left:9px;top:9px" width="13" height="13" viewBox="0 0 13 13"><rect x="0.5" y="1.5" width="12" height="11" fill="none" stroke="#c0c4cc" stroke-width="1"/><path d="M0.5 4.5H12.5M3.5 0V3M9.5 0V3M3 7H4M6 7H7M9 7H10M3 9.5H4M6 9.5H7M9 9.5H10" stroke="#c0c4cc" stroke-width="1"/></svg>
  <span class="abs" style="left:40px;top:0">开始日期</span>
  <span class="abs" style="left:114px;top:0;color:#606266">-</span>
  <span class="abs" style="left:139px;top:0">结束日期</span>
</div>

<div class="lbl" style="left:218px;top:191px">处理状态</div>
<div class="inp" style="left:286.5px;top:191px;width:182px">请选择处理状态<svg class="arr" width="12" height="7" viewBox="0 0 12 7"><path d="M0.8 0.8L6 6L11.2 0.8" fill="none" stroke="#c0c4cc" stroke-width="1.2"/></svg></div>
<div class="btn" style="left:479px;top:192px;width:73px;background:#1890ff;border:1px solid #1890ff;color:#fff">
  <svg class="abs" style="left:16px;top:9px" width="12" height="12" viewBox="0 0 12 12"><circle cx="5.3" cy="5.3" r="4.4" fill="none" stroke="#fff" stroke-width="1.2"/><path d="M8.5 8.5L11 11" stroke="#fff" stroke-width="1.2"/></svg>
  <span class="abs" style="left:33px;top:0">搜索</span>
</div>
<div class="btn" style="left:562px;top:192px;width:73px;background:#fff;border:1px solid #dcdfe6;color:#606266">
  <svg class="abs" style="left:16px;top:10px" width="11" height="11" viewBox="0 0 11 11"><path d="M9.8 4.5A4.4 4.4 0 0 0 1.8 3M1.2 6.5A4.4 4.4 0 0 0 9.2 8" fill="none" stroke="#606266" stroke-width="1.1"/><path d="M0.8 1V4H3.8Z M10.2 10V7H7.2Z" fill="#606266"/></svg>
  <span class="abs" style="left:33px;top:0">重置</span>
</div>

<div class="btn" style="left:218px;top:242px;width:73px;height:28px;line-height:26px;background:#fff8e6;border:1px solid #ffe399;color:#ffba00">
  <svg class="abs" style="left:17px;top:8px" width="10" height="10" viewBox="0 0 10 10"><path d="M5 0V7M1.8 4L5 7L8.2 4M0.5 9.3H9.5" fill="none" stroke="#ffba00" stroke-width="1.2"/></svg>
  <span class="abs" style="left:33px;top:0">导出</span>
</div>

<div class="note" style="left:1263px;top:207.5px">线上的异常<br>一般要【已处理】【已忽略】<br>不断清理相关的异常</div>

<div class="circ" style="left:1544px;top:242px">
  <svg class="abs" style="left:7.5px;top:7.5px" width="12" height="12" viewBox="0 0 12 12"><circle cx="5.3" cy="5.3" r="4.3" fill="none" stroke="#606266" stroke-width="1.1"/><path d="M8.4 8.4L10.8 10.8" stroke="#606266" stroke-width="1.1"/></svg>
</div>
<div class="circ" style="left:1582px;top:242px">
  <svg class="abs" style="left:8px;top:8px" width="11" height="11" viewBox="0 0 11 11"><path d="M9.8 4.5A4.4 4.4 0 0 0 1.8 3M1.2 6.5A4.4 4.4 0 0 0 9.2 8" fill="none" stroke="#606266" stroke-width="1.1"/><path d="M0.8 1V4H3.8Z M10.2 10V7H7.2Z" fill="#606266"/></svg>
</div>
<table id="tbl"><colgroup><col style="width:101.2px"><col style="width:101.2px"><col style="width:101.2px"><col style="width:101.2px"><col style="width:101.2px"><col style="width:248.4px"><col style="width:180.6px"><col style="width:249px"><col style="width:101.5px"><col style="width:101.5px"></colgroup>
<thead><tr><th>日志编号</th><th>用户编号</th><th>用户类型</th><th>应用名</th><th>请求方法名</th><th>请求地址</th><th>异常发生时间</th><th>异常名</th><th>处理状态</th><th>操作</th></tr></thead>
<tbody>
<tr class="" style="height:106px">
<td style="letter-spacing:0.8px">331</td><td>1</td><td><span class="etag g">管理员</span></td><td>yudao-admi<br>n-server</td><td>GET</td>
<td style="letter-spacing:0.3px">/admin-api/system/operate-log/exp<br>ort</td><td style="letter-spacing:0.8px">2022-03-26 20:34:32</td><td>com.alibaba.excel.exception.ExcelG<br>enerateException</td>
<td><span class="etag b">未处理</span></td><td class="ops"><div><svg width="12" height="9" viewBox="0 0 12 9" style="vertical-align:0px;margin-right:1px"><path d="M0.6 4.5C2 1.8 4 0.6 6 0.6S10 1.8 11.4 4.5C10 7.2 8 8.4 6 8.4S2 7.2 0.6 4.5Z" fill="none" stroke="#1890ff" stroke-width="1"/><circle cx="6" cy="4.5" r="1.9" fill="none" stroke="#1890ff" stroke-width="1"/></svg>详细</div><div><svg width="11" height="9" viewBox="0 0 11 9" style="vertical-align:0px;margin-right:1px"><path d="M0.8 4.8L3.8 7.8L10.2 1.2" fill="none" stroke="#1890ff" stroke-width="1"/></svg>已处理</div><div><svg width="11" height="9" viewBox="0 0 11 9" style="vertical-align:0px;margin-right:1px"><path d="M0.8 4.8L3.8 7.8L10.2 1.2" fill="none" stroke="#1890ff" stroke-width="1"/></svg>已忽略</div></td></tr>
<tr class="hov" style="height:106px">
<td style="letter-spacing:0.8px">330</td><td>1</td><td><span class="etag g">管理员</span></td><td>yudao-admi<br>n-server</td><td>GET</td>
<td style="letter-spacing:0.3px">/admin-api/system/operate-log/exp<br>ort</td><td style="letter-spacing:0.8px">2022-03-26 20:33:30</td><td>com.alibaba.excel.exception.ExcelG<br>enerateException</td>
<td><span class="etag b">未处理</span></td><td class="ops"><div><svg width="12" height="9" viewBox="0 0 12 9" style="vertical-align:0px;margin-right:1px"><path d="M0.6 4.5C2 1.8 4 0.6 6 0.6S10 1.8 11.4 4.5C10 7.2 8 8.4 6 8.4S2 7.2 0.6 4.5Z" fill="none" stroke="#1890ff" stroke-width="1"/><circle cx="6" cy="4.5" r="1.9" fill="none" stroke="#1890ff" stroke-width="1"/></svg>详细</div><div><svg width="11" height="9" viewBox="0 0 11 9" style="vertical-align:0px;margin-right:1px"><path d="M0.8 4.8L3.8 7.8L10.2 1.2" fill="none" stroke="#1890ff" stroke-width="1"/></svg>已处理</div><div><svg width="11" height="9" viewBox="0 0 11 9" style="vertical-align:0px;margin-right:1px"><path d="M0.8 4.8L3.8 7.8L10.2 1.2" fill="none" stroke="#1890ff" stroke-width="1"/></svg>已忽略</div></td></tr>
<tr class="" style="height:107px">
<td style="letter-spacing:0.8px">329</td><td>1</td><td><span class="etag g">管理员</span></td><td>yudao-admi<br>n-server</td><td>GET</td>
<td style="letter-spacing:0.3px">/admin-api/system/operate-log/exp<br>ort</td><td style="letter-spacing:0.8px">2022-03-26 20:31:53</td><td>com.alibaba.excel.exception.ExcelG<br>enerateException</td>
<td><span class="etag b">未处理</span></td><td class="ops"><div><svg width="12" height="9" viewBox="0 0 12 9" style="vertical-align:0px;margin-right:1px"><path d="M0.6 4.5C2 1.8 4 0.6 6 0.6S10 1.8 11.4 4.5C10 7.2 8 8.4 6 8.4S2 7.2 0.6 4.5Z" fill="none" stroke="#1890ff" stroke-width="1"/><circle cx="6" cy="4.5" r="1.9" fill="none" stroke="#1890ff" stroke-width="1"/></svg>详细</div><div><svg width="11" height="9" viewBox="0 0 11 9" style="vertical-align:0px;margin-right:1px"><path d="M0.8 4.8L3.8 7.8L10.2 1.2" fill="none" stroke="#1890ff" stroke-width="1"/></svg>已处理</div><div><svg width="11" height="9" viewBox="0 0 11 9" style="vertical-align:0px;margin-right:1px"><path d="M0.8 4.8L3.8 7.8L10.2 1.2" fill="none" stroke="#1890ff" stroke-width="1"/></svg>已忽略</div></td></tr>
<tr class="" style="height:106px">
<td style="letter-spacing:0.8px">328</td><td>1</td><td><span class="etag g">管理员</span></td><td>yudao-admi<br>n-server</td><td>GET</td>
<td style="letter-spacing:0.3px">/admin-api/system/operate-log/exp<br>ort</td><td style="letter-spacing:0.8px">2022-03-26 20:31:44</td><td>com.alibaba.excel.exception.ExcelG<br>enerateException</td>
<td><span class="etag b">未处理</span></td><td class="ops"><div><svg width="12" height="9" viewBox="0 0 12 9" style="vertical-align:0px;margin-right:1px"><path d="M0.6 4.5C2 1.8 4 0.6 6 0.6S10 1.8 11.4 4.5C10 7.2 8 8.4 6 8.4S2 7.2 0.6 4.5Z" fill="none" stroke="#1890ff" stroke-width="1"/><circle cx="6" cy="4.5" r="1.9" fill="none" stroke="#1890ff" stroke-width="1"/></svg>详细</div><div><svg width="11" height="9" viewBox="0 0 11 9" style="vertical-align:0px;margin-right:1px"><path d="M0.8 4.8L3.8 7.8L10.2 1.2" fill="none" stroke="#1890ff" stroke-width="1"/></svg>已处理</div><div><svg width="11" height="9" viewBox="0 0 11 9" style="vertical-align:0px;margin-right:1px"><path d="M0.8 4.8L3.8 7.8L10.2 1.2" fill="none" stroke="#1890ff" stroke-width="1"/></svg>已忽略</div></td></tr>
</tbody></table>
<div class="abs" style="left:1525px;top:362px;width:72px;height:57px;border:3px solid #f5230c;border-radius:6px"></div>
<div class="abs" style="z-index:3;left:198px;top:36px;width:8px;height:706px;background:linear-gradient(to right,rgba(0,21,41,.2),rgba(0,21,41,.05) 50%,rgba(0,21,41,0))"></div>
<!-- right shade -->
<div class="abs" style="left:1596px;top:36px;width:28px;height:706px;background:linear-gradient(to right,rgba(230,230,232,0),rgba(228,228,230,.9))"></div>
<div class="abs" style="left:1624px;top:0;width:3px;height:742px;background:linear-gradient(#3d5c64 0,#44595f 100px,#5e6165 220px,#66696c 100%)"></div>

</body></html>
